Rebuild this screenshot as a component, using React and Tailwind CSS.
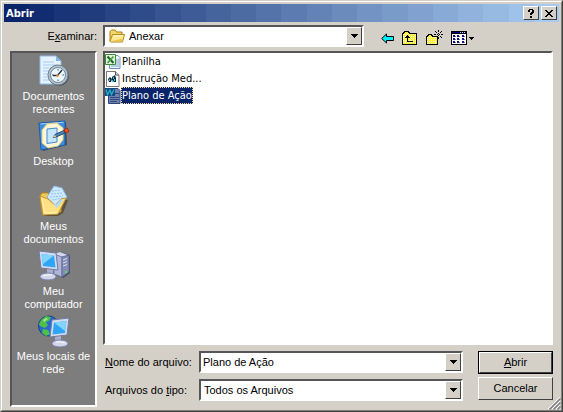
import React, { useState } from "react";

const RAISED =
  "border border-t-white border-l-white border-r-[#404040] border-b-[#404040] bg-[#d4d0c8]";
const SUNKEN =
  "border-2 border-t-[#55555a] border-l-[#55555a] border-r-white border-b-white";

// the title bar fades in visible steps
const titleBands = () => {
  const steps = 22;
  const from = [10, 36, 106];
  const to = [166, 202, 240];
  const stops = [];
  for (let i = 0; i < steps; i++) {
    const c = from.map((v, k) =>
      Math.round(v + ((to[k] - v) * i) / (steps - 1)),
    );
    stops.push(
      `rgb(${c.join(",")}) ${(i * 100) / steps}% ${((i + 1) * 100) / steps}%`,
    );
  }
  return `linear-gradient(to right, ${stops.join(", ")})`;
};

const DownArrow = () => (
  <svg width="7" height="4" viewBox="0 0 7 4" shapeRendering="crispEdges">
    <path d="M0 0h7v1h-1v1h-1v1h-1v1h-1v-1h-1v-1h-1v-1h-1z" />
  </svg>
);

const FolderIcon = () => (
  <svg width="16" height="14" viewBox="0 0 16 14" className="shrink-0">
    <path
      d="M1 12V2.5L2.5 1H6l1.5 2H13v3"
      fill="#f6d66b"
      stroke="#a87b12"
    />
    <path
      d="M1 12.5L3.5 5.5H15.5L13.5 13H1.5Z"
      fill="#ffe78f"
      stroke="#b58a1c"
    />
    <path d="M4.5 6.8h9.5" stroke="#fffbd8" />
    <path d="M3 12h10.5l.5-2.500z" fill="#efc64a" />
  </svg>
);

const BackIcon = () => (
  <svg width="13" height="11" viewBox="0 0 13 11">
    <path
      d="M.7 5.500L5.500 1v2.500h7v4H5.500V10z"
      fill="#00f0ff"
      stroke="#000"
    />
  </svg>
);

const UpIcon = () => (
  <svg width="16" height="14" viewBox="0 0 16 14" shapeRendering="crispEdges">
    <path
      d="M.5 13.500v-11h1v-1h1v-1h4v1h1v1h7v11z"
      fill="#fbee3c"
      stroke="#000"
    />
    <path
      d="M1 3.500h13M1 5.500h13M1 7.500h13M1 9.500h13M1 11.500h13"
      stroke="#fffbc8"
      strokeDasharray="1 1"
    />
    <path d="M5 4h1v1h1v1h1v1H6v3h5v1H5V7H3V6h1V5h1z" />
  </svg>
);

const NewFolderIcon = () => (
  <svg width="17" height="16" viewBox="0 0 17 16" shapeRendering="crispEdges">
    <path
      d="M.5 14.500v-8h1v-1h1v-1h3v1h1v1h5v8z"
      fill="#fbee3c"
      stroke="#000"
    />
    <path
      d="M1 7.500h10M1 9.500h10M1 11.500h10M1 13.500h10"
      stroke="#fffbc8"
      strokeDasharray="1 1"
    />
    <path d="M12 0h1v2h-1zM12 7h1v2h-1zM8 4h2v1H8zM15 4h2v1h-2zM9 1h1v1H9zM10 2h1v1h-1zM14 2h1v1h-1zM15 1h1v1h-1zM10 6h1v1h-1zM14 6h1v1h-1zM15 7h1v1h-1zM12 3h1v1h-1zM11 4h1v1h-1zM13 4h1v1h-1zM12 5h1v1h-1z" />
  </svg>
);

const ViewsIcon = () => (
  <svg width="23" height="14" viewBox="0 0 23 14" shapeRendering="crispEdges">
    <path d="M.5.5h15v13H.5z" fill="#fff" stroke="#000" />
    <path d="M1 1h14v1H1z" fill="#000080" />
    <path d="M1 2h14v1H1z" fill="#000" />
    <path d="M9 1h1v1H9zM11 1h1v1h-1zM13 1h1v1h-1z" fill="#d4d0c8" />
    <path
      d="M2 4h2v2H2zM6 4h2v2H6zM11 4h2v2h-2zM2 7h2v2H2zM6 7h2v2H6zM11 7h2v2h-2zM2 10h2v2H2zM6 10h2v2H6zM11 10h2v2h-2z"
      fill="#101080"
    />
    <path
      d="M4 5h1v1H4zM8 5h1v1H8zM13 5h1v1h-1zM4 8h1v1H4zM8 8h1v1H8zM13 8h1v1h-1zM4 11h1v1H4zM8 11h1v1H8zM13 11h1v1h-1z"
      fill="#777"
    />
    <path d="M18 6h5v1h-1v1h-1v1h-1v-1h-1v-1h-1z" />
  </svg>
);

const ExcelIcon = () => (
  <svg width="16" height="16" viewBox="0 0 16 16">
    <path d="M4.500 1.500H13l2 2v11H4.500z" fill="#eaf3fb" stroke="#6f93b8" />
    <path d="M11 6h3M11 8h3M6 12h8M11 10h3" stroke="#7fa8d0" />
    <path d="M.5.5h10v10H.5z" fill="#e4f2dd" stroke="#3c8a35" />
    <path d="M2.500 2.500l6 6.500" stroke="#1d6b1d" strokeWidth="2.200" />
    <path d="M8.500 2.500L2.500 9" stroke="#49a03f" strokeWidth="1.800" />
  </svg>
);

const ImageFileIcon = () => (
  <svg width="16" height="16" viewBox="0 0 16 16">
    <path d="M1.500.5h9l3.500 3.500v11.500H1.500z" fill="#fff" stroke="#777" />
    <path d="M10.500.5V4H14" fill="#ddd" stroke="#555" />
    <path d="M3 8l2-2 2 2-1 3H4zM7 6l3-2 1 3v4H9L7 9z" fill="#14243c" />
    <path d="M4 8h1v2H4zM8 6h1v2H8zM7 9h1v2H7zM9 8h1v2H9z" fill="#22d0d8" />
  </svg>
);

const WordIcon = () => (
  <svg width="16" height="16" viewBox="0 0 16 16">
    <path d="M3.500.5H13l2 2v13H3.500z" fill="#7182ab" stroke="#2d437c" />
    <path
      d="M10 5.500h4M5 9.500h9M5 11.500h9M5 13.500h7"
      stroke="#2f4782"
    />
    <path d="M0 0h10v8H0z" fill="#164a80" />
    <path
      d="M1 1.500l1.500 5L5 2l1.500 4.500L9 1.500"
      fill="none"
      stroke="#27b0cc"
      strokeWidth="1.300"
    />
  </svg>
);

const RecentIcon = () => (
  <svg width="32" height="32" viewBox="0 0 32 32">
    <path d="M2 1h16l5 5v23H2z" fill="#e6f3ff" stroke="#8bbdec" />
    <path d="M18 1v5h5z" fill="#7db4ea" />
    <path
      d="M5 7h11M5 10h14M5 13h8M5 16h6M5 19h5M5 22h6M5 25h8"
      stroke="#a5cdf3"
    />
    <circle cx="21" cy="21" r="10" fill="#4a545e" />
    <circle cx="20" cy="20" r="10" fill="#b4c3ce" stroke="#6f7d89" />
    <circle cx="20" cy="20" r="7.500" fill="#e9f7ff" stroke="#71899b" />
    <path
      d="M20 14v1.500M20 24.500V26M14 20h1.500M24.500 20H26"
      stroke="#35556e"
    />
    <path
      d="M24 15l-4.500 5.500H15"
      fill="none"
      stroke="#28343e"
      strokeWidth="1.400"
    />
    <circle cx="19.500" cy="20.500" r="1.300" fill="#e8862a" />
  </svg>
);

const DesktopIcon = () => (
  <svg width="32" height="32" viewBox="0 0 32 32">
    <path d="M3 4l25-2 1 23-24 6z" fill="#454d58" />
    <path d="M1 3l26-2v24L3 30z" fill="#3b8de0" stroke="#1b5cae" />
    <path d="M2.500 4l23-1.700" stroke="#a5d4ff" />
    <path
      d="M9 4l10-1 6 5v12l-5 6-10 2-6-5V10z"
      fill="#fff7d8"
      stroke="#e4c979"
    />
    <path d="M9 9l10-1v14l-10 1.500z" fill="#c4e6ff" stroke="#4389cf" />
    <path
      d="M17 14.500l9-4 1 2.500-9 4-3 .5z"
      fill="#4f86c1"
      stroke="#23466b"
    />
    <path d="M26 10l3-2 2 3-3 2z" fill="#ee5421" stroke="#a82d0b" />
    <path d="M14 17.500l3-2.500 1 2z" fill="#f5d29a" />
  </svg>
);

const DocumentsIcon = () => (
  <svg width="32" height="32" viewBox="0 0 32 32">
    <path d="M5 13l3-3h6l3 3 13 2-5 13-5 3H6z" fill="#5c543f" />
    <path d="M2 11l2-3h6l2 3 11 1v15H4z" fill="#f2c955" stroke="#bc8b20" />
    <path d="M9 12L16 1l8 2 5 9-9 13z" fill="#cfe9ff" stroke="#83b6e6" />
    <path
      d="M14 6l9-1M13 9l12-1M12 12l13-1M14 15l11-2"
      stroke="#8dc2f0"
      strokeDasharray="2 1"
    />
    <path
      d="M2 11l3 19 15-1 8-16-5 1-6 6-7-6z"
      fill="#ffe183"
      stroke="#c4972c"
    />
    <path d="M15 18l4 5 6-8-2-1-5 5z" fill="#acd9fb" />
    <path d="M4 14l3 14h12" fill="none" stroke="#fff3bd" />
  </svg>
);

const Monitor = () => (
  <>
    <path d="M1 1l17 2 2 17-17-2z" fill="#d7dbea" stroke="#6e7ba8" />
    <path d="M3.500 4l12.500 1.500 1.500 12L5 16z" fill="#2ea6f7" />
    <path d="M3.500 4l12.500 1.500L5 14z" fill="#82d5ff" />
    <path d="M9 19l6 1v5H9z" fill="#a9b0cf" />
    <ellipse
      cx="10"
      cy="26.500"
      rx="8"
      ry="3.500"
      fill="#d2d6ea"
      stroke="#7a84b0"
    />
    <path d="M5 26q5-2 9-1" fill="none" stroke="#fff" />
  </>
);

const ComputerIcon = () => (
  <svg width="32" height="32" viewBox="0 0 32 32">
    <path d="M17 4l6-2 9 3v18l-7 5-8-3z" fill="#40445c" />
    <path d="M16 4l6-2 8 3-5 3z" fill="#d3d7ec" />
    <path d="M16 4l8 3v20l-8-3z" fill="#b0b6d5" stroke="#777fa9" />
    <path d="M24 7l7-2v17l-7 5z" fill="#858cb6" stroke="#626a96" />
    <path d="M25 10l4-1.500M25 13l4-1.500M25 16l4-1.500" stroke="#dadff2" />
    <path d="M27 21h2v2h-2z" fill="#54dc49" />
    <Monitor />
  </svg>
);

const NetworkIcon = () => (
  <svg width="32" height="32" viewBox="0 0 32 32">
    <circle cx="10.500" cy="11" r="10" fill="#2a69cd" stroke="#173d83" />
    <path
      d="M3 5l5-4 5 1-2 4-3 1 2 3-3 3-5-2-1-2zM5 14l5 1 2 4-4 2-4-3z"
      fill="#4fc04a"
    />
    <path d="M5 5l3-2 2 1-4 3z" fill="#a4e78e" />
    <g transform="translate(32 2) scale(-1 1)">
      <Monitor />
    </g>
  </svg>
);

const places = [
  { label: "Documentos recentes", Icon: RecentIcon },
  { label: "Desktop", Icon: DesktopIcon },
  { label: "Meus documentos", Icon: DocumentsIcon },
  { label: "Meu computador", Icon: ComputerIcon },
  { label: "Meus locais de rede", Icon: NetworkIcon },
];

const files = [
  { name: "Planilha", Icon: ExcelIcon },
  { name: "Instrução Med...", Icon: ImageFileIcon },
  { name: "Plano de Ação", Icon: WordIcon },
];

const ArrowBox = () => (
  <span
    className={`pointer-events-none col-start-1 row-start-1 flex h-[18px] w-4 items-center justify-center justify-self-end ${RAISED}`}
  >
    <DownArrow />
  </span>
);

const App = () => {
  const [selected, setSelected] = useState("Plano de Ação");
  const [fileName, setFileName] = useState("Plano de Ação");

  const handlePick = (name) => {
    setSelected(name);
    setFileName(name);
  };

  return (
    <div className="min-h-screen border border-t-[#d4d0c8] border-l-[#d4d0c8] border-r-[#404040] border-b-[#404040] bg-[#d4d0c8] flex flex-col text-black text-[11px] leading-[13px] font-['Liberation_Sans',Arial,sans-serif]">
      <div className="relative flex-1 border border-t-white border-l-white border-r-[#808080] border-b-[#808080] p-[2px] flex flex-col">
        <header
          className="flex h-[18px] items-center justify-between pl-[2px] pr-[2px]"
          style={{ background: titleBands() }}
        >
          <h1 className="text-[11px] font-bold text-white font-['DejaVu_Sans_Condensed','DejaVu_Sans',sans-serif]">
            Abrir
          </h1>
          <div className="flex gap-[2px]">
            <button
              aria-label="Ajuda"
              className={`flex h-[14px] w-4 items-center justify-center ${RAISED}`}
            >
              <svg
                width="6"
                height="9"
                viewBox="0 0 6 9"
                shapeRendering="crispEdges"
              >
                <path d="M1 0h4v1h1v3H5v1H4v1H2V4h1V3h1V1H2v2H0V1h1zM2 7h2v2H2z" />
              </svg>
            </button>
            <button
              aria-label="Fechar"
              className={`flex h-[14px] w-4 items-center justify-center ${RAISED}`}
            >
              <svg
                width="8"
                height="7"
                viewBox="0 0 8 7"
                shapeRendering="crispEdges"
              >
                <path d="M0 0h2v1h1v1h2V1h1V0h2v1H7v1H6v1H5v1h1v1h1v1h1v1H6V6H5V5H3v1H2v1H0V6h1V5h1V4h1V3H2V2H1V1H0z" />
              </svg>
            </button>
          </div>
        </header>

        <div className="flex-1 grid grid-cols-[87px_1fr] grid-rows-[22px_1fr] gap-x-[6px] gap-y-1 px-[6px] pt-[3px] pb-px">
          <label htmlFor="folder" className="self-center text-right">
            E<u>x</u>aminar:
          </label>
          <div className="flex items-center">
            <div className={`grid h-[22px] w-[58%] bg-white ${SUNKEN}`}>
              <span className="pointer-events-none col-start-1 row-start-1 self-center pl-1">
                <FolderIcon />
              </span>
              <select
                id="folder"
                defaultValue="Anexar"
                className="col-start-1 row-start-1 h-[18px] w-full appearance-none bg-transparent pl-6 font-[inherit] outline-none"
              >
                <option>Anexar</option>
              </select>
              <ArrowBox />
            </div>
            <div className="flex items-center gap-2 pl-[17px] pt-1">
              <button aria-label="Voltar">
                <BackIcon />
              </button>
              <button aria-label="Um nível acima">
                <UpIcon />
              </button>
              <button aria-label="Nova pasta">
                <NewFolderIcon />
              </button>
              <button aria-label="Modos de exibição">
                <ViewsIcon />
              </button>
            </div>
          </div>

          <nav
            className={`flex flex-col items-center bg-[#7d7d7d] pt-[2px] ${SUNKEN}`}
          >
            {places.map(({ label, Icon }) => (
              <button
                key={label}
                className="flex min-h-[65px] w-full flex-col items-center gap-[3px] px-1 text-white"
              >
                <Icon />
                <span>{label}</span>
              </button>
            ))}
          </nav>

          <div className="flex flex-col gap-[6px] pb-[6px]">
            <ul
              className={`flex-1 bg-white font-['DejaVu_Sans_Condensed','DejaVu_Sans',sans-serif] ${SUNKEN}`}
            >
              {files.map(({ name, Icon }) => (
                <li key={name}>
                  <button
                    className="flex h-[17px] items-center"
                    onClick={() => handlePick(name)}
                  >
                    <Icon />
                    <span
                      className={
                        selected === name
                          ? "border border-dotted border-[#f5db95] bg-[#0a246a] py-px text-white"
                          : "border border-transparent py-px"
                      }
                    >
                      {name}
                    </span>
                  </button>
                </li>
              ))}
            </ul>

            <div className="flex gap-[15px]">
              <div className="grid flex-1 grid-cols-[96px_1fr] content-start items-center gap-y-[6px] whitespace-nowrap">
                <label htmlFor="filename" className="pl-[2px]">
                  <u>N</u>ome do arquivo:
                </label>
                <div className={`grid h-[22px] bg-white ${SUNKEN}`}>
                  <input
                    id="filename"
                    type="text"
                    value={fileName}
                    onChange={(e) => setFileName(e.target.value)}
                    className="col-start-1 row-start-1 h-[18px] w-full bg-transparent px-[2px] outline-none"
                  />
                  <ArrowBox />
                </div>
                <label htmlFor="filetype" className="pl-[2px]">
                  Arquivos do <u>t</u>ipo:
                </label>
                <div className={`grid h-[22px] bg-white ${SUNKEN}`}>
                  <select
                    id="filetype"
                    defaultValue="Todos os Arquivos"
                    className="col-start-1 row-start-1 h-[18px] w-full appearance-none bg-transparent px-[3px] font-[inherit] outline-none"
                  >
                    <option>Todos os Arquivos</option>
                  </select>
                  <ArrowBox />
                </div>
              </div>
              <div className="flex w-[75px] flex-col gap-[3px]">
                <button className="h-[23px] border border-black">
                  <span
                    className={`flex h-full items-center justify-center ${RAISED}`}
                  >
                    <span>
                      <u>A</u>brir
                    </span>
                  </span>
                </button>
                <button className={`h-[23px] ${RAISED}`}>Cancelar</button>
              </div>
            </div>
          </div>
        </div>

        <svg
          className="absolute right-0 bottom-0"
          width="13"
          height="13"
          viewBox="0 0 13 13"
        >
          <path d="M0 12L12 0M4 12l8-8M8 12l4-4" stroke="#fff" />
          <path
            d="M1.500 12.500l11-11M5.500 12.500l7-7M9.500 12.500l3-3"
            stroke="#808080"
            strokeWidth="1.500"
          />
        </svg>
      </div>
    </div>
  );
};

export default App;
